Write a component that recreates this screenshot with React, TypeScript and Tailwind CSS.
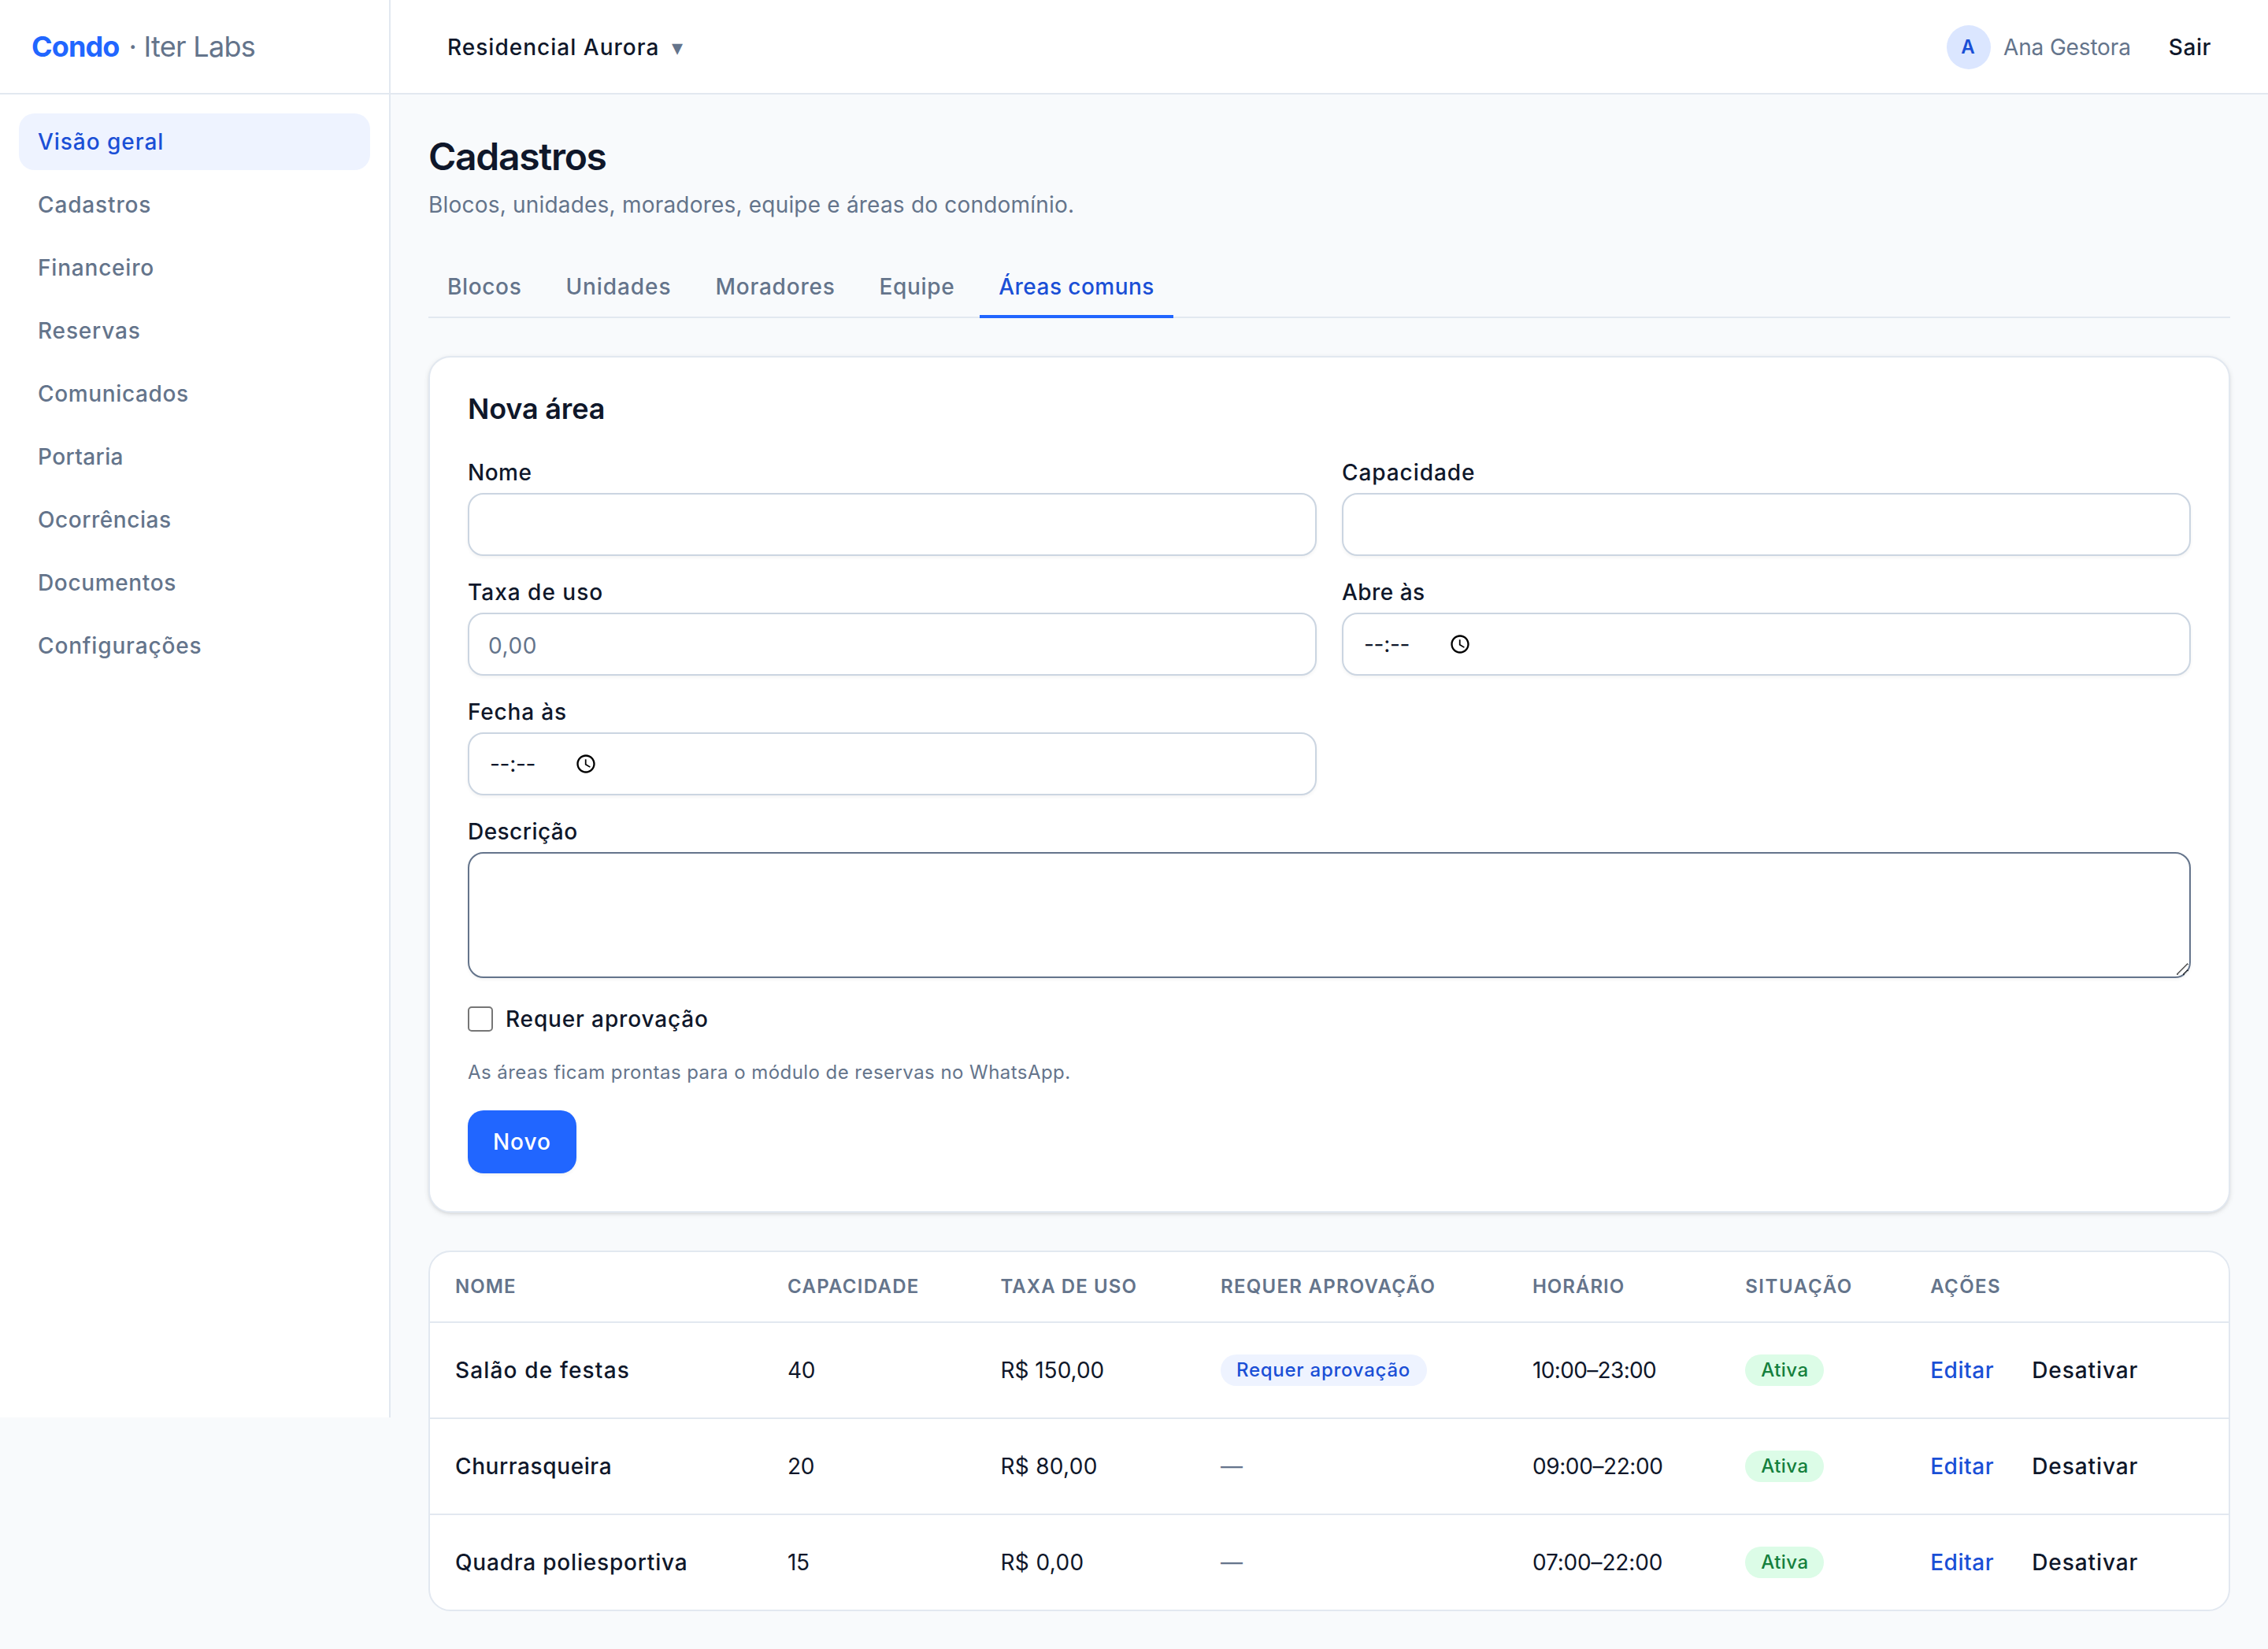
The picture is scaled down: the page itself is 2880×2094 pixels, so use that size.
import React from 'react';

interface Area {
  name: string;
  nameSpacing: string;
  capacity: number;
  fee: string;
  feeSpacing: string;
  needsApproval: boolean;
  hours: string;
  hoursSpacing: string;
}

const navItems = [
  { label: 'Visão geral', spacing: 'tracking-[0.48px]' },
  { label: 'Cadastros', spacing: 'tracking-[0.43px]' },
  { label: 'Financeiro', spacing: 'tracking-[0.4px]' },
  { label: 'Reservas', spacing: 'tracking-[0.42px]' },
  { label: 'Comunicados', spacing: 'tracking-[0.32px]' },
  { label: 'Portaria', spacing: 'tracking-[0.2px]' },
  { label: 'Ocorrências', spacing: 'tracking-[0.28px]' },
  { label: 'Documentos', spacing: 'tracking-[0.32px]' },
  { label: 'Configurações', spacing: 'tracking-[0.42px]' },
];

const tabs = [
  { label: 'Blocos', spacing: 'tracking-[0.32px]' },
  { label: 'Unidades', spacing: 'tracking-[0.46px]' },
  { label: 'Moradores', spacing: 'tracking-[0.39px]' },
  { label: 'Equipe', spacing: 'tracking-[0.32px]' },
  { label: 'Áreas comuns', spacing: 'tracking-[0.23px]' },
];

const columns = [
  { label: 'Nome', style: 'w-[211px] tracking-[0.55px]' },
  { label: 'Capacidade', style: 'w-[135.2px] tracking-[0.65px]' },
  { label: 'Taxa de uso', style: 'w-[139.8px] tracking-[0.55px]' },
  { label: 'Requer aprovação', style: 'w-[198px] tracking-[0.63px]' },
  { label: 'Horário', style: 'w-[135.1px] tracking-[0.5px]' },
  { label: 'Situação', style: 'w-[117.5px] tracking-[0.8px]' },
  { label: 'Ações', style: 'tracking-[0.72px]' },
];

const areas: Area[] = [
  {
    name: 'Salão de festas',
    nameSpacing: 'tracking-[0.58px]',
    capacity: 40,
    fee: 'R$ 150,00',
    feeSpacing: 'tracking-normal',
    needsApproval: true,
    hours: '10:00–23:00',
    hoursSpacing: 'tracking-[-0.32px]',
  },
  {
    name: 'Churrasqueira',
    nameSpacing: 'tracking-[0.3px]',
    capacity: 20,
    fee: 'R$ 80,00',
    feeSpacing: 'tracking-[0.15px]',
    needsApproval: false,
    hours: '09:00–22:00',
    hoursSpacing: 'tracking-[-0.2px]',
  },
  {
    name: 'Quadra poliesportiva',
    nameSpacing: 'tracking-[0.4px]',
    capacity: 15,
    fee: 'R$ 0,00',
    feeSpacing: 'tracking-[0.2px]',
    needsApproval: false,
    hours: '07:00–22:00',
    hoursSpacing: 'tracking-[-0.08px]',
  },
];

const fieldClass =
  'flex h-10 w-full items-center rounded-[10px] border border-[#cbd5e1] bg-white px-3 text-sm shadow-xs placeholder:text-[#64748b]';

interface FieldProps {
  label: string;
  spacing: string;
  children: React.ReactNode;
}

const Field: React.FC<FieldProps> = ({ label, spacing, children }) => (
  <div className="flex flex-col gap-1.5">
    <label className={`text-sm leading-none font-medium ${spacing}`}>{label}</label>
    {children}
  </div>
);

const TimeInput: React.FC = () => (
  <div className={fieldClass}>
    <span className="w-[55px] pl-[1px] tracking-[-0.15px]">--:--</span>
    <svg className="h-[14px] w-[14px]" viewBox="0 0 24 24" fill="#000">
      <path d="M11.99 2C6.47 2 2 6.48 2 12s4.47 10 9.99 10C17.52 22 22 17.52 22 12S17.52 2 11.99 2zM12 20c-4.42 0-8-3.58-8-8s3.58-8 8-8 8 3.58 8 8-3.58 8-8 8z" />
      <path d="M12.5 7H11v6l5.25 3.15.75-1.23-4.5-2.67z" />
    </svg>
  </div>
);

const Sidebar: React.FC = () => (
  <aside className="h-[900px] w-[248px] shrink-0 border-r border-[#e2e8f0] bg-white">
    <div className="flex h-15 items-center gap-1.5 border-b border-[#e2e8f0] px-5 text-lg">
      <span className="font-bold tracking-tight text-[#2166ff]">Condo</span>
      <span className="tracking-[-0.35px] text-[#64748b]">· Iter Labs</span>
    </div>
    <nav className="flex flex-col gap-1 p-3">
      {navItems.map((item, i) => (
        <a
          key={item.label}
          className={`rounded-[10px] px-3 py-2 text-sm font-medium ${item.spacing} ${
            i === 0 ? 'bg-[#eef3ff] text-[#1a4fd6]' : 'text-[#64748b]'
          }`}
        >
          {item.label}
        </a>
      ))}
    </nav>
  </aside>
);

const Topbar: React.FC = () => (
  <header className="flex h-15 items-center justify-between border-b border-[#e2e8f0] bg-white px-6">
    <button className="flex h-9 items-center gap-2 px-3 text-sm font-medium">
      <span className="tracking-[0.51px]">Residencial Aurora</span>
      <span className="text-sm text-[#64748b]">▾</span>
    </button>
    <div className="flex items-center gap-3">
      <div className="flex items-center gap-2">
        <span className="flex h-7 w-7 items-center justify-center rounded-full bg-[#dbe6ff] pr-px text-xs font-semibold text-[#1a4fd6]">
          A
        </span>
        <span className="text-sm tracking-[-0.08px] text-[#64748b]">Ana Gestora</span>
      </div>
      <button className="h-9 px-3 text-sm font-medium tracking-[0.3px]">Sair</button>
    </div>
  </header>
);

const AreaForm: React.FC = () => (
  <section className="rounded-[14px] border border-[#e2e8f0] bg-white p-6 shadow-sm">
    <h2 className="mb-6 text-lg leading-none font-semibold tracking-[-0.08px]">Nova área</h2>
    <div className="flex flex-col gap-4">
      <div className="grid grid-cols-2 gap-4">
        <Field label="Nome" spacing="tracking-[0.25px]">
          <input className={fieldClass} />
        </Field>
        <Field label="Capacidade" spacing="tracking-[0.46px]">
          <input className={fieldClass} />
        </Field>
        <Field label="Taxa de uso" spacing="tracking-[0.5px]">
          <input className={`${fieldClass} tracking-[0.3px]`} placeholder="0,00" />
        </Field>
        <Field label="Abre às" spacing="tracking-[0.23px]">
          <TimeInput />
        </Field>
        <Field label="Fecha às" spacing="tracking-[0.42px]">
          <TimeInput />
        </Field>
      </div>
      <Field label="Descrição" spacing="tracking-[0.23px]">
        <textarea className="block h-20 w-full rounded-[10px] border border-[#64748b] bg-white px-3 py-2 text-sm shadow-xs" />
      </Field>
      <label className="flex items-center gap-2 text-sm font-medium tracking-[0.43px]">
        <input type="checkbox" className="h-4 w-4" />
        Requer aprovação
      </label>
      <p className="text-xs tracking-[0.225px] text-[#64748b]">
        As áreas ficam prontas para o módulo de reservas no WhatsApp.
      </p>
      <button className="h-10 self-start rounded-[10px] bg-[#2166ff] px-4 text-sm font-medium tracking-[0.46px] text-white shadow-xs">
        Novo
      </button>
    </div>
  </section>
);

const AreaTable: React.FC = () => (
  <section className="overflow-hidden rounded-[14px] border border-[#e2e8f0] bg-white">
    <table className="w-full table-fixed text-left text-sm">
      <thead>
        <tr className="border-b border-[#e2e8f0]">
          {columns.map((col) => (
            <th key={col.label} className={`h-11 px-4 text-xs font-semibold text-[#64748b] uppercase ${col.style}`}>
              {col.label}
            </th>
          ))}
        </tr>
      </thead>
      <tbody className="divide-y divide-[#e2e8f0]">
        {areas.map((area) => (
          <tr key={area.name}>
            <td className={`px-4 py-3 font-medium ${area.nameSpacing}`}>{area.name}</td>
            <td className="px-4 py-3 tracking-[-0.2px]">{area.capacity}</td>
            <td className={`px-4 py-3 ${area.feeSpacing}`}>{area.fee}</td>
            <td className="px-4 py-3">
              {area.needsApproval ? (
                <span className="inline-flex rounded-full bg-[#eef3ff] px-2.5 py-0.5 text-xs font-medium tracking-[0.37px] text-[#1a4fd6]">
                  Requer aprovação
                </span>
              ) : (
                <span className="text-[#64748b]">—</span>
              )}
            </td>
            <td className={`px-4 py-3 ${area.hoursSpacing}`}>{area.hours}</td>
            <td className="px-4 py-3">
              <span className="inline-flex rounded-full bg-[#dcfce7] px-2.5 py-0.5 text-xs font-medium tracking-[0.25px] text-[#15803d]">
                Ativa
              </span>
            </td>
            <td className="px-4 py-3">
              <div className="flex items-center gap-3">
                <a className="font-medium tracking-[0.28px] text-[#1a4fd6]">Editar</a>
                <button className="h-9 px-3 font-medium tracking-[0.46px]">Desativar</button>
              </div>
            </td>
          </tr>
        ))}
      </tbody>
    </table>
  </section>
);

export default function App() {
  return (
    <div className="h-[2094px] w-[2880px] overflow-hidden bg-[#f8fafc]">
      <div className="flex h-[1047px] w-[1440px] origin-top-left scale-200 bg-[#f8fafc] font-['Inter',sans-serif] text-[#0f172a]">
        <Sidebar />
        <div className="flex min-w-0 flex-1 flex-col">
          <Topbar />
          <main className="flex flex-col gap-6 p-6">
            <div>
              <h1 className="text-2xl font-semibold tracking-[-0.65px]">Cadastros</h1>
              <p className="mt-1 text-sm tracking-[0.1px] text-[#64748b]">
                Blocos, unidades, moradores, equipe e áreas do condomínio.
              </p>
            </div>
            <div className="flex gap-1 border-b border-[#e2e8f0]">
              {tabs.map((tab) => (
                <a
                  key={tab.label}
                  className={`-mb-px border-b-2 px-3 py-2 text-sm font-medium ${tab.spacing} ${
                    tab.label === 'Áreas comuns'
                      ? 'border-[#2166ff] text-[#1a4fd6]'
                      : 'border-transparent text-[#64748b]'
                  }`}
                >
                  {tab.label}
                </a>
              ))}
            </div>
            <AreaForm />
            <AreaTable />
          </main>
        </div>
      </div>
    </div>
  );
}
